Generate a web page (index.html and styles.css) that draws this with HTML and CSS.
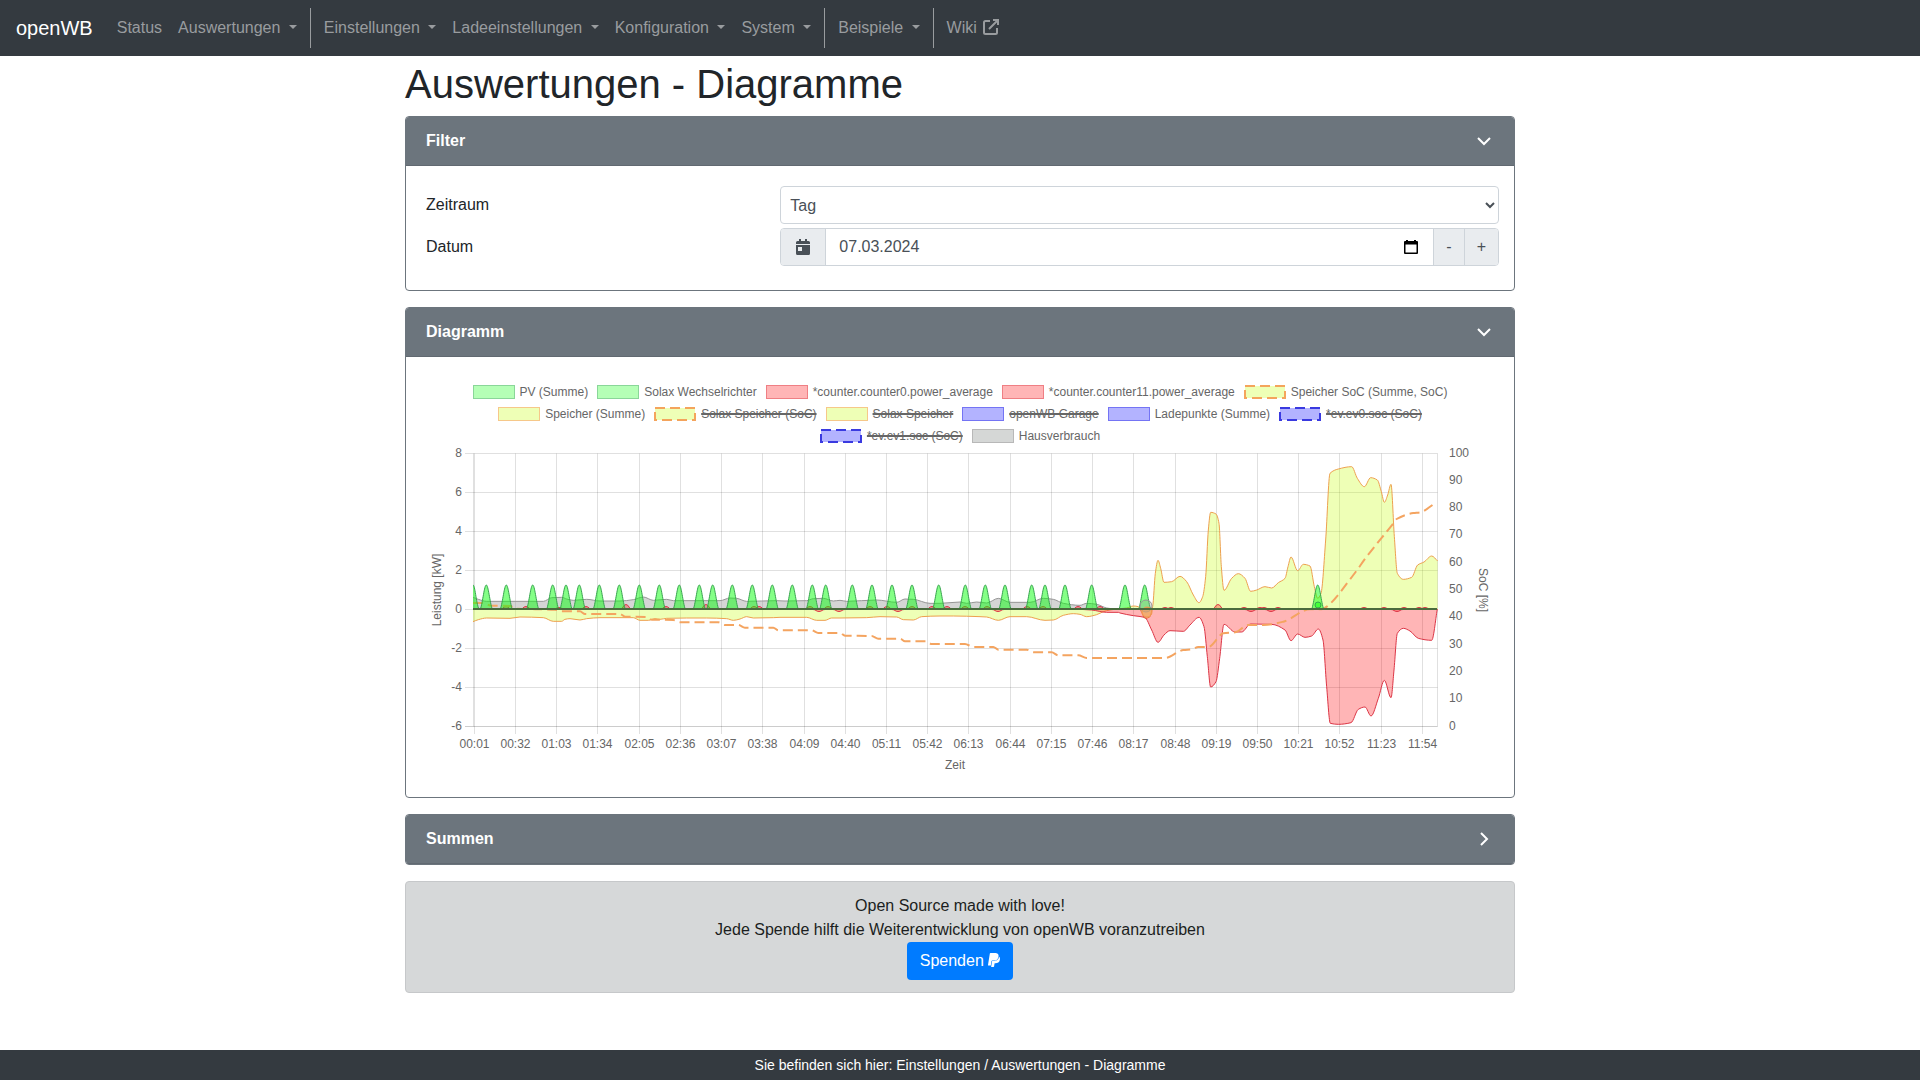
FILE: index.html
```html
<!DOCTYPE html>
<html lang="de">
<head>
<meta charset="utf-8">
<meta name="viewport" content="width=device-width, initial-scale=1">
<title>openWB - Auswertungen - Diagramme</title>
<link rel="stylesheet" href="styles.css">
</head>
<body>
<nav class="navbar">
  <a class="brand" href="#">openWB</a>
  <a class="nav-link" href="#">Status</a>
  <a class="nav-link dropdown" href="#">Auswertungen </a>
  <span class="divider"></span>
  <a class="nav-link dropdown" href="#">Einstellungen </a>
  <a class="nav-link dropdown" href="#">Ladeeinstellungen </a>
  <a class="nav-link dropdown" href="#">Konfiguration </a>
  <a class="nav-link dropdown" href="#">System </a>
  <span class="divider"></span>
  <a class="nav-link dropdown" href="#">Beispiele </a>
  <span class="divider"></span>
  <a class="nav-link" href="#">Wiki <svg class="icon-external" viewBox="0 0 16 16"><path d="M7 2H2.500Q1 2 1 3.500V13.500Q1 15 2.500 15H12.500Q14 15 14 13.500V9M10 1h5v5M14.500 1.500L6 10"/></svg></a>
</nav>

<main class="container">
  <h1>Auswertungen - Diagramme</h1>

  <section class="card">
    <header class="card-header"><span>Filter</span>
      <svg class="chevron" viewBox="0 0 16 16"><path d="M2 5l6 6 6-6"/></svg>
    </header>
    <div class="card-body">
      <div class="form-row">
        <label for="range">Zeitraum</label>
        <select id="range" class="control"><option>Tag</option><option>Monat</option><option>Jahr</option></select>
      </div>
      <div class="form-row">
        <label for="date">Datum</label>
        <div class="input-group">
          <span class="addon"><svg class="icon-day" viewBox="0 0 14 16"><path fill-rule="evenodd" d="M0 5V3.500Q0 2 1.500 2H3V0h2v2h4V0h2v2h1.500Q14 2 14 3.500V5zM0 6h14v8.500Q14 16 12.500 16h-11Q0 16 0 14.500zM2 8v4h4V8z"/></svg></span>
          <span class="date-field">
            <input id="date" type="text" value="07.03.2024">
            <svg class="icon-picker" viewBox="0 0 14 15"><path fill-rule="evenodd" d="M2 0h2v1h6V0h2v1h1q1 0 1 1v11q0 1-1 1H1q-1 0-1-1V2q0-1 1-1h1zM1.500 4.500v8h11v-8z"/></svg>
          </span>
          <button class="step" type="button">-</button>
          <button class="step" type="button">+</button>
        </div>
      </div>
    </div>
  </section>

  <section class="card">
    <header class="card-header"><span>Diagramm</span>
      <svg class="chevron" viewBox="0 0 16 16"><path d="M2 5l6 6 6-6"/></svg>
    </header>
    <div class="card-body chart-body">
      <ul class="legend">
        <li><i class="swatch green"></i>PV (Summe)</li>
        <li><i class="swatch green"></i>Solax Wechselrichter</li>
        <li><i class="swatch red"></i>*counter.counter0.power_average</li>
        <li><i class="swatch red"></i>*counter.counter11.power_average</li>
        <li><svg class="swatch-dashed lime" viewBox="0 0 42 14"><rect x="1" y="1" width="40" height="12"/></svg>Speicher SoC (Summe, SoC)</li>
      </ul>
      <ul class="legend">
        <li><i class="swatch yellow"></i>Speicher (Summe)</li>
        <li class="off"><svg class="swatch-dashed lime" viewBox="0 0 42 14"><rect x="1" y="1" width="40" height="12"/></svg><span>Solax Speicher (SoC)</span></li>
        <li class="off"><i class="swatch yellow"></i><span>Solax Speicher</span></li>
        <li class="off"><i class="swatch blue"></i><span>openWB Garage</span></li>
        <li><i class="swatch blue"></i>Ladepunkte (Summe)</li>
        <li class="off"><svg class="swatch-dashed navy" viewBox="0 0 42 14"><rect x="1" y="1" width="40" height="12"/></svg><span>*ev.ev0.soc (SoC)</span></li>
      </ul>
      <ul class="legend">
        <li class="off"><svg class="swatch-dashed navy" viewBox="0 0 42 14"><rect x="1" y="1" width="40" height="12"/></svg><span>*ev.ev1.soc (SoC)</span></li>
        <li><i class="swatch gray"></i>Hausverbrauch</li>
      </ul>
      <svg id="chart" class="chart" viewBox="426 447 1068 330" role="img" aria-label="Leistung und SoC über die Zeit"></svg>
    </div>
  </section>

  <section class="card">
    <header class="card-header collapsed"><span>Summen</span>
      <svg class="chevron" viewBox="0 0 16 16"><path d="M5 2l6 6-6 6"/></svg>
    </header>
  </section>

  <section class="donate">
    <div>Open Source made with love!</div>
    <div>Jede Spende hilft die Weiterentwicklung von openWB voranzutreiben</div>
    <a class="btn" href="#">Spenden <svg class="icon-paypal" viewBox="0 0 384 512"><path d="M111.400 295.900c-3.500 19.200-17.400 108.700-21.500 134-.3 1.800-1 2.500-3 2.500H12.300c-7.600 0-13.100-6.600-12.100-13.900L58.800 46.600c1.500-9.600 10.100-16.900 20-16.900 152.300 0 165.100-3.700 204 11.400 60.100 23.300 65.600 79.500 44 140.300-21.500 62.600-72.500 89.500-140.100 90.300-43.400.7-69.500-7-75.300 24.200zM357.100 152c-1.800-1.300-2.500-1.800-3 1.300-2 11.400-5.100 22.500-8.800 33.600-39.900 113.800-150.500 103.900-204.500 103.900-6.100 0-10.100 3.300-10.900 9.400-22.600 140.400-27.100 169.700-27.100 169.700-1 7.100 3.500 12.900 10.600 12.900h63.500c8.600 0 15.700-6.300 17.400-14.900.7-5.400-1.100 6.100 14.400-91.300 4.600-22 14.300-19.700 29.300-19.700 71 0 126.400-28.800 142.900-112.300 6.500-34.800 4.600-71.400-23.800-92.600z"/></svg></a>
  </section>
</main>

<footer class="footer">Sie befinden sich hier: Einstellungen / Auswertungen - Diagramme</footer>
<script src="chart.js"></script>
</body>
</html>
```
FILE: styles.css
```css
* { box-sizing: border-box; }
body {
  margin: 0;
  min-height: 100vh;
  display: flex;
  flex-direction: column;
  font-family: "Liberation Sans", Arial, sans-serif;
  font-size: 16px;
  line-height: 24px;
  color: #212529;
  background: #fff;
}
.navbar {
  display: flex;
  align-items: center;
  min-height: 56px;
  padding: 8px 16px;
  background: #343a40;
}
.brand {
  margin-right: 16px;
  font-size: 20px;
  line-height: 30px;
  color: #fff;
  text-decoration: none;
}
.nav-link {
  padding: 8px;
  color: #999c9f;
  text-decoration: none;
  white-space: pre;
}
.dropdown::after {
  content: "";
  display: inline-block;
  margin-left: 4px;
  vertical-align: 4px;
  border: 4px solid transparent;
  border-top-color: currentColor;
  border-bottom: 0;
}
.divider { width: 1px; height: 40px; margin: 0 5px; background: #999c9f; }
.icon-external {
  width: 16px;
  height: 16px;
  margin-left: 2px;
  vertical-align: -2px;
  fill: none;
  stroke: currentColor;
  stroke-width: 2;
}
.container { width: 100%; max-width: 1140px; margin: 0 auto; padding: 4px 15px 0; }
h1 { margin: 0 0 8px; font-size: 40px; line-height: 48px; font-weight: normal; }
.card { margin-bottom: 16px; border: 1px solid #6c757d; border-radius: 4px; overflow: hidden; }
.card-header {
  display: flex;
  align-items: center;
  justify-content: space-between;
  padding: 12px 22px 12px 20px;
  border-bottom: 1px solid #616971;
  background: #6c757d;
  color: #fff;
  font-weight: bold;
}
.chevron { width: 16px; height: 16px; fill: none; stroke: #fff; stroke-width: 2; }
.card-body { padding: 20px; }
.form-row {
  display: grid;
  grid-template-columns: 1fr 2fr;
  align-items: center;
  margin: 0 -5px 4px;
}
.form-row label { padding-left: 5px; }
.control, .input-group {
  width: 100%;
  height: 38px;
  border: 1px solid #ced4da;
  border-radius: 4px;
  background: #fff;
  color: #495057;
}
.control { padding: 6px 5px; font: inherit; }
.input-group { display: flex; overflow: hidden; }
.addon {
  display: flex;
  align-items: center;
  padding: 0 15px;
  border-right: 1px solid #ced4da;
  background: #e9ecef;
}
.icon-day { width: 14px; height: 16px; fill: #495057; }
.date-field { flex: 1; display: flex; align-items: center; padding: 0 15px 0 13px; }
.date-field input {
  flex: 1;
  min-width: 0;
  padding: 0;
  border: 0;
  outline: 0;
  background: none;
  font: inherit;
  color: inherit;
}
.icon-picker { width: 14px; height: 15px; fill: #000; }
.step {
  padding: 0 12px;
  border: 0;
  border-left: 1px solid #ced4da;
  background: #e9ecef;
  color: #495057;
  font: inherit;
}
.chart-body { padding-top: 24px; }
.legend {
  display: flex;
  flex-wrap: wrap;
  justify-content: center;
  gap: 0 9px;
  margin: 0;
  padding: 0;
  list-style: none;
  font-size: 12px;
  line-height: 22px;
  color: #666;
}
.legend li { display: flex; align-items: center; gap: 5px; }
.swatch { width: 42px; height: 14px; border: 1px solid; }
.green { background: #b5ffb6; border-color: #8ad699; }
.red { background: #ffb5b6; border-color: #ef7f84; }
.yellow { background: #eeffb6; border-color: #f6c88a; }
.blue { background: #b3b3ff; border-color: #7474f4; }
.gray { background: #d5d7d6; border-color: #b8b8b8; }
.swatch-dashed { width: 42px; height: 14px; stroke-width: 2; stroke-dasharray: 10 5; }
.lime { fill: #eeffb6; stroke: #f4a45c; }
.navy { fill: #b3b3ff; stroke: #3a3ae0; }
.off span { text-decoration: line-through 2px; }
.chart { display: block; width: 100%; height: auto; }
.chart text { font-size: 12px; fill: #666; }
.grid { stroke: #000; stroke-opacity: 0.12; fill: none; }
.axis { stroke: #000; stroke-opacity: 0.2; fill: none; }
.house { fill: #969696; fill-opacity: 0.4; stroke: #969696; }
.battery { fill: #c8ff0d; fill-opacity: 0.3; stroke: #eda04f; }
.meter { fill: #ff0a0d; fill-opacity: 0.3; stroke: #dc3545; }
.pv { fill: #0aff0d; fill-opacity: 0.5; stroke: #37a34e; }
.marker { fill: #f4a460; fill-opacity: 0.5; stroke: #f09a50; }
.marker-ring { fill: #969696; fill-opacity: 0.3; stroke: #969696; }
.zero { stroke: #4a6b3d; stroke-width: 2; }
.soc { fill: none; stroke: #f4a460; stroke-width: 2; stroke-dasharray: 10 5; }
.donate {
  padding: 12px 20px;
  border: 1px solid #c6c8ca;
  border-radius: 4px;
  background: #d6d8d9;
  color: #1b1e21;
  text-align: center;
}
.btn {
  display: inline-block;
  padding: 7px 13px;
  border-radius: 4px;
  background: #007bff;
  color: #fff;
  text-decoration: none;
  vertical-align: top;
}
.icon-paypal { width: 12px; height: 16px; vertical-align: -2px; fill: #fff; }
.footer {
  margin-top: auto;
  padding: 3px;
  background: #343a40;
  color: #fff;
  font-size: 14px;
  text-align: center;
}
```
FILE: chart.js
```js
const svg = document.getElementById('chart');
const LEFT = 473, RIGHT = 1437, TOP = 453.5, BOTTOM = 726.5, ZERO = 609.5;
const PER_MINUTE = 1.3296;

function add(name, attrs, text) {
  const node = document.createElementNS('http://www.w3.org/2000/svg', name);
  for (const key in attrs) node.setAttribute(key, attrs[key]);
  if (text !== undefined) node.textContent = text;
  svg.appendChild(node);
}

/* Samples are stored in thirds of a unit, relative to the origin of their block. */
function block(x0, y0, list) {
  const out = [];
  for (let i = 0; i < list.length; i += 2) out.push([x0 + list[i] / 3, y0 + list[i + 1] / 3]);
  return out;
}

/* Monotone cubic interpolation through the points. */
function curve(p) {
  const n = p.length, d = [], m = [];
  for (let i = 0; i < n - 1; i++) d.push((p[i + 1][1] - p[i][1]) / (p[i + 1][0] - p[i][0]));
  for (let i = 0; i < n; i++) {
    const a = d[i - 1], b = d[i];
    m.push(a === undefined ? b : b === undefined ? a : a * b <= 0 ? 0 : 2 * a * b / (a + b));
  }
  let s = `M${p[0]}`;
  for (let i = 0; i < n - 1; i++) {
    const h = (p[i + 1][0] - p[i][0]) / 3;
    s += `C${p[i][0] + h},${p[i][1] + m[i] * h} ${p[i + 1][0] - h},${p[i + 1][1] - m[i + 1] * h} ${p[i + 1]}`;
  }
  return s;
}

function area(cls, p) {
  const line = curve(p);
  add('path', { class: cls, d: `${line}L${p[p.length - 1][0]},${ZERO}L${p[0][0]},${ZERO}Z`, style: 'stroke:none' });
  add('path', { class: cls, d: line, style: 'fill:none' });
}

/* Axes and grid */
for (let kw = 8; kw >= -6; kw -= 2) {
  const y = Math.floor(ZERO - kw * 19.5) + 0.5;
  add('path', { class: kw === -6 ? 'grid axis' : 'grid', d: `M465 ${y}H${RIGHT + 0.5}` });
  add('text', { x: 462, y: y + 3, 'text-anchor': 'end' }, kw);
}
for (let i = 0; i < 24; i++) {
  const min = 1 + i * 31;
  const x = Math.floor(LEFT + min * PER_MINUTE) + 0.5;
  const label = String(Math.floor(min / 60)).padStart(2, '0') + ':' + String(min % 60).padStart(2, '0');
  add('path', { class: 'grid', d: `M${x} ${TOP}V734` });
  add('text', { x: x, y: 748, 'text-anchor': 'middle' }, label);
}
add('path', { class: 'grid', d: `M${LEFT + 0.5} ${TOP}V${BOTTOM}M${RIGHT + 0.5} ${TOP}V${BOTTOM}` });
for (let soc = 0; soc <= 100; soc += 10) {
  add('text', { x: 1449, y: Math.round(BOTTOM - soc * 2.73) + 3 }, soc);
}
add('text', { x: 955, y: 769, 'text-anchor': 'middle' }, 'Zeit');
add('text', { transform: 'translate(441 590) rotate(-90)', 'text-anchor': 'middle' }, 'Leistung [kW]');
add('text', { transform: 'translate(1479 590) rotate(90)', 'text-anchor': 'middle' }, 'SoC [%]');

/* Hausverbrauch */
area('house', [
  ...block(420, 560, [159,112,175,118,200,124,370,124,395,113,425,112,440,117,460,121,500,118,540,123,600,123,640,119,670,111,700,121,740,118,760,122,900,122,930,114,950,115,980,124,1070,122]),
  ...block(780, 560, [15,123,80,122,100,116,130,115,160,123,180,121,200,124,290,120,350,127,375,117,400,118,450,130,480,130,540,126,560,130,590,126,620,129,655,115,690,127,750,127,790,115,820,118,850,130,900,136,920,130,950,133,980,144,1010,148])
]);

/* Speicher */
area('battery', [
  ...block(420, 560, [159,185,175,179,200,174,270,175,300,171,370,173,400,184,425,184,435,178,450,176,480,180,500,176,540,173,640,173,660,181,685,181,705,176,720,178,740,175,800,174,860,174,920,176,940,181,960,177,980,170,1000,174,1060,173]),
  ...block(780, 560, [0,172,80,172,110,181,135,181,155,174,180,174,260,173,300,170,350,171,370,179,400,180,425,170,480,168,520,168,600,170,620,171,655,181,690,170,740,170,795,181,820,180,850,166,880,161,900,163,920,170,950,164,970,155,990,150,1010,147]),
  ...block(1120, 440, [20,504,40,498,55,500,64,515,75,535,88,532,98,500,106,400,114,361,122,385,132,427,155,425,180,409,200,425,220,465,237,488,248,470,257,410,265,270,272,217,288,222,297,250,304,380,312,451,335,415,355,401,375,415,392,454,410,450,435,440,455,444,475,428,495,415,504,380,513,351,533,392,550,373,570,378,583,440,593,475,603,460,617,300,630,100,655,87,695,80,712,115,733,140,752,113,772,120,784,155,793,187,803,165,813,133,823,290,832,400,850,418,875,412,893,375,912,366,935,348,953,363])
]);

/* Netzbezug */
area('meter', [
  ...block(780, 560, [900,148,935,150,980,157,1015,157]),
  ...block(1120, 440, [0,519,40,527,74,532,95,570,114,607,132,585,150,572,190,574,210,555,237,532,252,560,262,650,272,741,288,725,299,655,312,553,345,576,365,576,392,552,455,553,495,570,513,602,533,582,555,592,575,588,595,567,609,600,620,740,631,850,655,853,693,848,715,808,735,801,753,828,775,775,793,721,813,773,822,690,832,580,850,565,870,573,895,595,935,601,952,507])
]);

/* Kurze Ausschläge des zweiten Zählers: [x, Höhe] */
const blips = [
  [506, 3], [526, 3], [559, 2], [586, 3], [626, 5], [666, 3], [706, 5], [754, 3], [759, 3],
  [810, 3], [819, -2], [828, 3], [839, -2], [870, 3], [887, 3], [898, -2], [912, 3], [932, 3],
  [947, 3], [965, 3], [987, 3], [998, -2], [1027, 3], [1043, 3], [1078, 3], [1100, 3],
  [1148, 2], [1165, 2], [1171, 2], [1218, 5], [1244, 2], [1251, -2], [1260, 2], [1264, 2],
  [1271, -2], [1278, 2], [1364, 2], [1384, 2], [1397, -2], [1404, 2], [1419, 2], [1425, 2]
];
for (const [x, h] of blips) {
  const y = ZERO - h;
  add('path', { class: 'meter', d: `M${x - 6} ${ZERO}C${x - 3} ${ZERO} ${x - 3} ${y} ${x} ${y}S${x + 3} ${ZERO} ${x + 6} ${ZERO}` });
}

/* Speicher SoC */
add('path', { class: 'soc', d: curve([
  ...block(420, 560, [159,129,185,129,215,137,270,138,290,146,405,149,425,154,480,154,495,162,600,162,615,170,680,171,695,179,760,180,780,187,895,187,915,195,955,195,975,203,1060,203,1075,211]),
  ...block(780, 560, [5,211,95,211,115,219,180,219,195,227,275,228,295,236,360,236,375,244,440,244,455,252,555,252,580,261,640,261,655,269,740,269,760,277,815,277,835,286,895,286,920,294,1015,294]),
  ...block(1120, 440, [0,654,135,654,190,630,215,628,235,621,265,621,310,580,345,577,385,555,430,555,490,545,570,508,605,508,620,500,700,405,740,350,820,250,830,237,880,219,900,217,945,190])
]) });

/* PV */
const peaks = [
  486.3, 506.3, 532.7, 552.7, 566, 579.3, 599.3, 619.3, 639.3, 659.3, 679.3, 699.3, 712.7, 732.3,
  752.3, 772.3, 792.3, 812.3, 825.7, 852.3, 872, 892, 912, 938.7, 965.3, 985.3, 1005, 1031.7, 1045,
  1065, 1091.7, 1125, 1144.7, 1317.7
];
add('path', { class: 'pv', d: `M473 585C475 585 476 602 479 ${ZERO}H473` });
for (const x of peaks) {
  add('path', { class: 'pv', d: `M${x - 6} ${ZERO}C${x - 3.5} 602 ${x - 2} 585 ${x} 585S${x + 3.5} 602 ${x + 6} ${ZERO}` });
}
add('circle', { class: 'marker-ring', cx: 1146, cy: 606, r: 6 });
add('circle', { class: 'marker', cx: 1147, cy: 612, r: 5 });
add('circle', { class: 'pv', cx: 1318, cy: 605, r: 3 });
add('path', { class: 'zero', d: `M${LEFT} 609H${RIGHT}` });
```
